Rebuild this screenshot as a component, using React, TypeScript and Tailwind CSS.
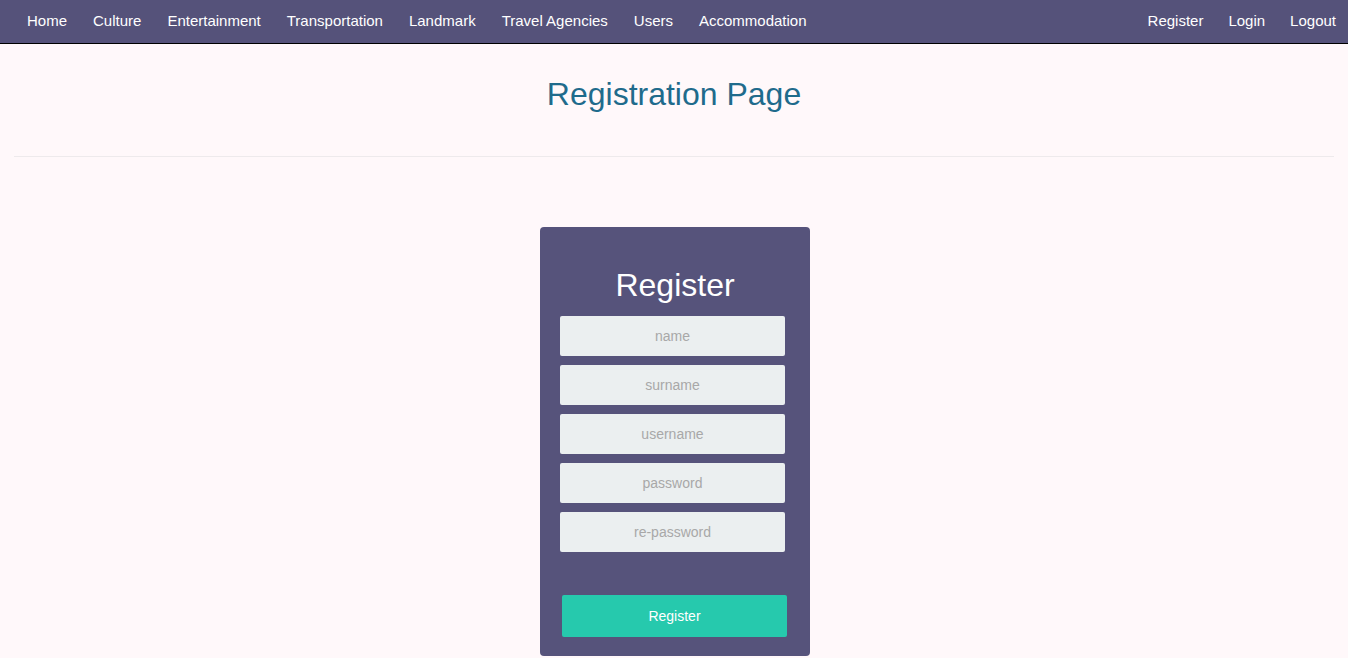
const leftLinks = [
  "Home",
  "Culture",
  "Entertainment",
  "Transportation",
  "Landmark",
  "Travel Agencies",
  "Users",
  "Accommodation",
];
const rightLinks = ["Register", "Login", "Logout"];
const fields = ["name", "surname", "username", "password", "re-password"];

export default function App() {
  return (
    <div className="min-h-screen bg-[#fff8fa] font-['Liberation_Sans',Arial,sans-serif]">
      <nav className="flex h-[44px] items-center justify-between border-b border-black bg-[#55527a] pl-[27px] pr-[12px] text-[15px] text-white">
        <ul className="flex gap-[26px]">
          {leftLinks.map((l) => (
            <li key={l}>
              <a href="#">{l}</a>
            </li>
          ))}
        </ul>
        <ul className="flex gap-[25px]">
          {rightLinks.map((l) => (
            <li key={l}>
              <a href="#">{l}</a>
            </li>
          ))}
        </ul>
      </nav>

      <div className="mx-[14px]">
        <h1 className="pt-[32px] pb-[44px] text-center text-[32px] leading-[36px] text-[#1f6b8c]">
          Registration Page
        </h1>
        <hr className="border-t border-[#eeeaec]" />
      </div>

      <div className="flex justify-center pt-[70px] pl-[2px]">
        <form className="flex w-[270px] flex-col rounded-[4px] bg-[#56537b] pt-[38px] pb-[19px]">
          <h2 className="mb-[11px] text-center text-[32px] leading-[40px] text-white">Register</h2>
          <div className="flex flex-col gap-[9px] pl-[20px]">
            {fields.map((f) => (
              <input
                key={f}
                type={f.includes("password") ? "password" : "text"}
                placeholder={f}
                className="h-[40px] w-[225px] rounded-[2px] bg-[#ebeff0] text-center text-[14px] text-[#555] outline-none placeholder:text-[#a8a8a8]"
              />
            ))}
          </div>
          <button
            type="button"
            className="mt-[43px] ml-[22px] h-[42px] w-[225px] rounded-[2px] bg-[#26c9ad] text-[14px] text-white"
          >
            Register
          </button>
        </form>
      </div>
    </div>
  );
}
